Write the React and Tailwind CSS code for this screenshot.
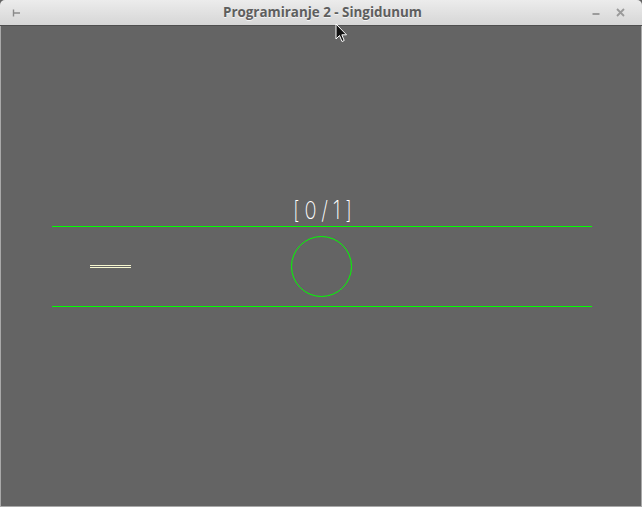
export default function App() {
  return (
    <div className="relative w-[642px] h-[507px] flex flex-col bg-[#646464] overflow-hidden">
      {/* window title bar */}
      <div className="h-[26px] grid grid-cols-[1fr_auto_1fr] items-center px-[12px] rounded-t-[5px] bg-gradient-to-b from-[#ececec] to-[#d6d6d6] border-b border-[#4e4e4e]">
        <svg width="10" height="8" viewBox="0 0 10 8" className="mt-[1px]">
          <path d="M1.5 0.5 V7.5 M1.5 4 H8" stroke="#8a8a8a" strokeWidth="1.4" fill="none" />
        </svg>
        <div className="font-['Open_Sans',sans-serif] font-bold text-[13.4px] text-[#5e5e5e] [text-shadow:0_1px_0_#f4f4f4] ml-[3px]">
          Programiranje 2 - Singidunum
        </div>
        <div className="flex items-center justify-end gap-[16px] mr-[5px]">
          <svg width="8" height="8" viewBox="0 0 8 8">
            <path d="M0.5 5 H7.5" stroke="#8a8a8a" strokeWidth="1.6" />
          </svg>
          <svg width="9" height="9" viewBox="0 0 9 9">
            <path d="M1 1 L8 8 M8 1 L1 8" stroke="#9a9a9a" strokeWidth="1.8" />
          </svg>
        </div>
      </div>

      {/* game canvas */}
      <div className="flex-1 flex flex-col border-x border-b border-[#a9a9a9] bg-[#646464]">
        <div className="h-[172px]" />
        <div className="h-[28px] flex justify-center items-end pb-[3px]">
          <span className="font-['Inter',sans-serif] font-extralight text-[25px] leading-[25px] text-white tracking-[6px] mr-[-6px] scale-x-[0.8] ml-[2px]">
            [0/1]
          </span>
        </div>
        <div className="relative ml-[51px] w-[540px] h-[81px] border-y border-[#00ff00]">
          <div className="absolute left-[38px] top-[38px] w-[41px] h-[3px] border-y border-[#f6f6cf]" />
          <div className="absolute left-[239px] top-[9px] w-[61px] h-[61px] rounded-full border border-[#00ff00]" />
        </div>
      </div>

      {/* mouse pointer */}
      <svg className="absolute left-[335px] top-[23px]" width="13" height="20" viewBox="0 0 13 20">
        <path d="M1 1 V16 L4.5 12.5 L7 18.5 L9.2 17.5 L6.8 11.8 H11.5 Z" fill="#111" stroke="#fff" strokeWidth="1" />
      </svg>
    </div>
  );
}
